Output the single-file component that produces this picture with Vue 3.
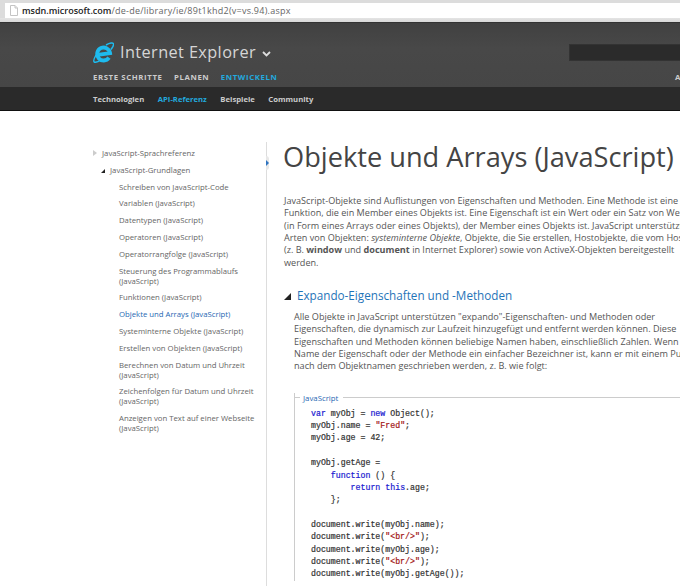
<script setup>
const menu = [
  { text: "JavaScript-Sprachreferenz", level: 0, arrow: "closed" },
  { text: "JavaScript-Grundlagen", level: 1, arrow: "open" },
  { text: "Schreiben von JavaScript-Code", level: 2 },
  { text: "Variablen (JavaScript)", level: 2 },
  { text: "Datentypen (JavaScript)", level: 2 },
  { text: "Operatoren (JavaScript)", level: 2 },
  { text: "Operatorrangfolge (JavaScript)", level: 2 },
  { text: "Steuerung des Programmablaufs (JavaScript)", level: 2 },
  { text: "Funktionen (JavaScript)", level: 2 },
  { text: "Objekte und Arrays (JavaScript)", level: 2, active: true },
  { text: "Systeminterne Objekte (JavaScript)", level: 2 },
  { text: "Erstellen von Objekten (JavaScript)", level: 2 },
  { text: "Berechnen von Datum und Uhrzeit (JavaScript)", level: 2 },
  { text: "Zeichenfolgen für Datum und Uhrzeit (JavaScript)", level: 2 },
  { text: "Anzeigen von Text auf einer Webseite (JavaScript)", level: 2 }
];
</script>

<template>
  <div class="page">
    <div class="browser-bar">
      <div class="url-field">
        <svg class="doc-icon" width="8" height="11" viewBox="0 0 8 11">
          <path d="M.5 .5h4.500L7.500 3v7.500H.5z" fill="#fff" stroke="#c4c4c4" />
          <path d="M5 .5V3h2.500" fill="#eee" stroke="#c4c4c4" />
        </svg>
        <span class="host">msdn.microsoft.com</span><span class="path">/de-de/library/ie/89t1khd2(v=vs.94).aspx</span>
      </div>
    </div>

    <header class="masthead">
      <div class="brand-row">
        <svg class="ie-logo" width="21" height="21" viewBox="0 0 21 21">
          <g fill="none" stroke="#1ebbee">
            <path d="M4.500 12H17A6.500 6.500 0 1 0 15.300 16.400" stroke-width="3.800" transform="rotate(-8 10.500 11)" />
            <path d="M13 3C17 .8 20 .4 20.500 1.800 21 3.200 19.500 5.500 18 7.500" stroke-width="1.500" />
            <path d="M3 13C1 16.500 0 19 1.200 20 2.500 20.800 5.500 19.500 8 17.800" stroke-width="1.500" />
          </g>
        </svg>
        <span class="brand">Internet Explorer</span>
        <svg class="chevron" width="9" height="6" viewBox="0 0 9 6">
          <path d="M1 1l3.500 3.500L8 1" fill="none" stroke="#ddd" stroke-width="1.800" />
        </svg>
        <div class="search-box"></div>
      </div>
      <nav class="main-nav">
        <a>ERSTE SCHRITTE</a>
        <a>PLANEN</a>
        <a class="current">ENTWICKELN</a>
        <a class="cut-off">Ar</a>
      </nav>
    </header>

    <nav class="sub-nav">
      <a>Technologien</a>
      <a class="current">API-Referenz</a>
      <a>Beispiele</a>
      <a>Community</a>
    </nav>

    <div class="columns">
      <aside class="sidebar">
        <ul class="tree">
          <li v-for="item in menu" :key="item.text" :class="['lvl' + item.level, { active: item.active }]">
            <i v-if="item.arrow" :class="'arrow-' + item.arrow"></i>{{ item.text }}
          </li>
        </ul>
        <span class="collapse-tab"><i></i></span>
      </aside>

      <main class="content">
        <h1>Objekte und Arrays (JavaScript)</h1>
        <p class="intro">
          JavaScript-Objekte sind Auflistungen von Eigenschaften und Methoden. Eine Methode ist eine<br />
          Funktion, die ein Member eines Objekts ist. Eine Eigenschaft ist ein Wert oder ein Satz von Werten<br />
          (in Form eines Arrays oder eines Objekts), der Member eines Objekts ist. JavaScript unterstützt vier<br />
          Arten von Objekten: <em>systeminterne Objekte</em>, Objekte, die Sie erstellen, Hostobjekte, die vom Host<br />
          (z. B. <b>window</b> und <b>document</b> in Internet Explorer) sowie von ActiveX-Objekten bereitgestellt<br />
          werden.
        </p>
        <h2><i class="arrow-open big"></i>Expando-Eigenschaften und -Methoden</h2>
        <div class="section">
          <p>
            Alle Objekte in JavaScript unterstützen "expando"-Eigenschaften- und Methoden oder<br />
            Eigenschaften, die dynamisch zur Laufzeit hinzugefügt und entfernt werden können. Diese<br />
            Eigenschaften und Methoden können beliebige Namen haben, einschließlich Zahlen. Wenn der<br />
            Name der Eigenschaft oder der Methode ein einfacher Bezeichner ist, kann er mit einem Punkt<br />
            nach dem Objektnamen geschrieben werden, z. B. wie folgt:
          </p>
        </div>
        <div class="code-box">
          <div class="code-head"><span>JavaScript</span></div>
<pre><span class="kw">var</span> myObj = <span class="kw">new</span> Object();
myObj.name = <span class="str">"Fred"</span>;
myObj.age = 42;

myObj.getAge =
    <span class="kw">function</span> () {
        <span class="kw">return</span> <span class="kw">this</span>.age;
    };

document.write(myObj.name);
document.write(<span class="str">"&lt;br/&gt;"</span>);
document.write(myObj.age);
document.write(<span class="str">"&lt;br/&gt;"</span>);
document.write(myObj.getAge());</pre>
        </div>
      </main>
    </div>
  </div>
</template>

<style scoped>
.page {
  width: 680px;
  height: 586px;
  overflow: hidden;
  background: #fff;
  font-family: "Open Sans", sans-serif;
  color: #555;
}
.browser-bar {
  height: 22px;
  box-sizing: border-box;
  padding: 3px 0 0 5px;
  background: linear-gradient(#dcdcdc, #dcdcdc 18px, #e4e4e4 18px, #d8d8d8);
}
.url-field {
  display: flex;
  align-items: center;
  height: 15px;
  padding-left: 5px;
  background: #fff;
  font-size: 9px;
  white-space: nowrap;
}
.doc-icon {
  flex: none;
  margin-right: 4px;
}
.host {
  color: #222;
  font-weight: 600;
}
.path {
  color: #666;
  letter-spacing: 0.25px;
}
.masthead {
  height: 65px;
  box-sizing: border-box;
  padding: 17px 0 0 93px;
  background: linear-gradient(#414141, #484848 40%, #464646);
  border-top: 1px solid #333;
}
.brand-row {
  display: flex;
  align-items: center;
  height: 24px;
}
.brand-row > * {
  flex: none;
}
.brand {
  margin-left: 6px;
  font-size: 16.300px;
  color: #d6d6d6;
  letter-spacing: 0.4px;
  white-space: nowrap;
}
.chevron {
  margin: 3px 0 0 6px;
}
.search-box {
  width: 200px;
  height: 15px;
  margin-left: 298px;
  background: #2b2b2b;
  border: 1px solid #333;
}
.main-nav {
  display: flex;
  margin-top: 8px;
  font-size: 7.800px;
  font-weight: 700;
  letter-spacing: 0.6px;
  color: #ccc;
  white-space: nowrap;
}
.main-nav a {
  flex: none;
  margin-right: 11.500px;
}
.main-nav .current,
.sub-nav .current {
  color: #22a9de;
}
.main-nav .cut-off {
  margin: 0 0 0 386px;
}
.sub-nav {
  display: flex;
  gap: 13.500px;
  height: 24px;
  box-sizing: border-box;
  padding-left: 93px;
  align-items: center;
  background: #2a2a2a;
  border-bottom: 1px solid #111;
  font-size: 7.700px;
  font-weight: 700;
  color: #ccc;
}
.columns {
  display: flex;
  align-items: flex-start;
  height: 476px;
}
.sidebar {
  position: relative;
  flex: none;
  box-sizing: border-box;
  width: 267px;
  height: 476px;
  margin-top: 31px;
  padding-left: 93px;
  border-right: 1px solid #ddd;
}
.tree {
  list-style: none;
  margin: 0;
  padding: 6px 0 0;
  font-size: 7.750px;
  line-height: 10px;
  color: #666;
}
.tree li {
  position: relative;
  margin-bottom: 6.800px;
  width: 150px;
}
.lvl0 {
  padding-left: 9px;
}
.lvl1 {
  padding-left: 17px;
}
.lvl2 {
  padding-left: 26px;
}
.tree .active {
  color: #1f68b3;
}
.arrow-closed {
  position: absolute;
  left: 0;
  top: 2px;
  border-left: 4px solid #ccc;
  border-top: 3px solid transparent;
  border-bottom: 3px solid transparent;
}
.arrow-open {
  position: absolute;
  left: 8px;
  top: 4px;
  border-right: 4px solid #222;
  border-top: 4px solid transparent;
}
.collapse-tab {
  position: absolute;
  right: -3px;
  top: 14px;
  width: 3px;
  height: 14px;
  background: #e8e8e8;
  border-radius: 0 4px 4px 0;
}
.collapse-tab i {
  position: absolute;
  left: 0;
  top: 4px;
  border-left: 3px solid #2f74c0;
  border-top: 3px solid transparent;
  border-bottom: 3px solid transparent;
}
.content {
  flex: none;
  width: 500px;
  padding: 29px 0 0 17px;
  white-space: nowrap;
  font-size: 9.100px;
  line-height: 12.350px;
}
h1 {
  margin: 0 0 0 -1px;
  font-size: 27.200px;
  line-height: 34px;
  font-weight: 400;
  color: #444;
}
p {
  margin: 0;
}
.intro {
  margin-top: 21px;
}
h2 {
  position: relative;
  margin: 18px 0 0;
  padding-left: 13px;
  font-size: 11.700px;
  line-height: 16px;
  font-weight: 400;
  color: #1f74b8;
}
.arrow-open.big {
  left: 0;
  top: 6px;
  border-right-width: 7px;
  border-top-width: 7px;
}
.section {
  margin-top: 8px;
  padding-left: 10px;
}
.code-box {
  margin: 20px 0 0 10px;
  border-left: 1px solid #ccc;
}
.code-head {
  display: flex;
  align-items: center;
  height: 10px;
  color: #1f68b3;
  font-size: 7.800px;
}
.code-head::before {
  content: "";
  width: 5px;
  height: 1px;
  margin-right: 3px;
  background: #ccc;
}
.code-head::after {
  content: "";
  flex: 1;
  height: 1px;
  margin-left: 5px;
  background: #ccc;
}
pre {
  margin: 5px 0 0;
  padding-left: 16px;
  font-family: "Liberation Mono", monospace;
  font-size: 8.250px;
  line-height: 12.350px;
  color: #333;
  -webkit-text-stroke: 0.2px #333;
}
.kw {
  color: #1a1ad0;
  -webkit-text-stroke: 0.2px #1a1ad0;
}
.str {
  color: #a31515;
  -webkit-text-stroke: 0.2px #a31515;
}
</style>

<style>
html, body {
  margin: 0;
  overflow: hidden;
}
</style>
